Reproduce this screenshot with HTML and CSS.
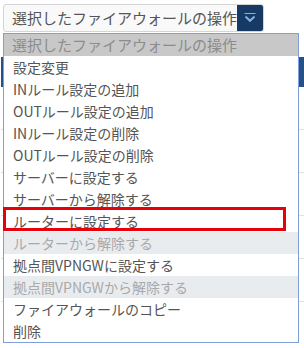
FILE: index.html
```html
<!DOCTYPE html>
<html lang="ja">
<head>
  <meta charset="UTF-8" />
  <meta name="viewport" content="width=device-width, initial-scale=1.0"/>
  <title>ファイアウォール操作</title>
  <link rel="stylesheet" href="styles.css">
</head>
<body>

  <!-- ACTION SELECT -->
  <div class="toolbar">
    <div class="select-box">
      <span class="select-text">選択したファイアウォールの操作</span>
      <span class="select-btn">
        <svg width="12" height="10" viewBox="0 0 12 10">
          <path d="M0.5 0.5 H11.5" stroke="#7fb2e5" stroke-width="1" fill="none"/>
          <path d="M1.5 3.5 L6 7.8 L10.5 3.5" stroke="#7fb2e5" stroke-width="2" fill="none"/>
        </svg>
      </span>
    </div>
  </div>

  <!-- PAGE CONTENT BEHIND THE MENU -->
  <div class="table">
    <div class="table-head"></div>
    <div class="table-row"></div>
    <div class="table-row"></div>
    <div class="table-row"></div>
    <div class="table-row"></div>
    <div class="table-row"></div>
  </div>

  <!-- OPEN DROPDOWN -->
  <ul class="menu">
    <li class="placeholder">選択したファイアウォールの操作</li>
    <li>設定変更</li>
    <li>INルール設定の追加</li>
    <li>OUTルール設定の追加</li>
    <li>INルール設定の削除</li>
    <li>OUTルール設定の削除</li>
    <li>サーバーに設定する</li>
    <li>サーバーから解除する</li>
    <li>ルーターに設定する</li>
    <li class="disabled">ルーターから解除する</li>
    <li>拠点間VPNGWに設定する</li>
    <li class="disabled">拠点間VPNGWから解除する</li>
    <li>ファイアウォールのコピー</li>
    <li>削除</li>
  </ul>

  <div class="highlight"></div>

</body>
</html>
```

FILE: styles.css
```css
body {
  font-family: "Noto Sans CJK JP", "Noto Sans", sans-serif;
  background: #fff;
  color: #555;
  margin: 0;
  padding: 0;
  position: relative;
  height: 348px;
  overflow: hidden;
}
.toolbar {
  padding: 4px 0 0 3px;
}
.select-box {
  display: flex;
  width: 261px;
  height: 28px;
  box-sizing: border-box;
  border: 1px solid #d4d4d4;
  border-radius: 3px;
  background: #f9f9f9;
  overflow: hidden;
}
.select-text {
  flex: 1;
  font-size: 15px;
  line-height: 26px;
  padding-left: 8px;
  white-space: nowrap;
}
.select-btn {
  width: 29px;
  background: #163a63;
  display: flex;
  align-items: center;
  justify-content: center;
}
.table {
  margin-top: 25px;
  padding-left: 1px;
}
.table-head {
  height: 30px;
  background: #274f89;
}
.table-row {
  height: 42px;
  border-bottom: 1px solid #dde1e6;
}
.menu {
  position: absolute;
  top: 33px;
  left: 3px;
  width: 296px;
  box-sizing: border-box;
  margin: 0;
  padding: 0;
  list-style: none;
  background: #fff;
  border: 1px solid #7f9fd8;
}
.menu li {
  height: 22px;
  line-height: 22px;
  font-size: 14px;
  padding-left: 9px;
  white-space: nowrap;
}
.menu .placeholder {
  background: #c8c8c8;
  color: #8c8c8c;
  font-size: 15px;
  padding-left: 8px;
}
.menu .disabled {
  background: #e9ecef;
  color: #a9a9a9;
}
.highlight {
  position: absolute;
  top: 207px;
  left: 3px;
  width: 283px;
  height: 24px;
  box-sizing: border-box;
  border: 3px solid #e8000b;
}
```
